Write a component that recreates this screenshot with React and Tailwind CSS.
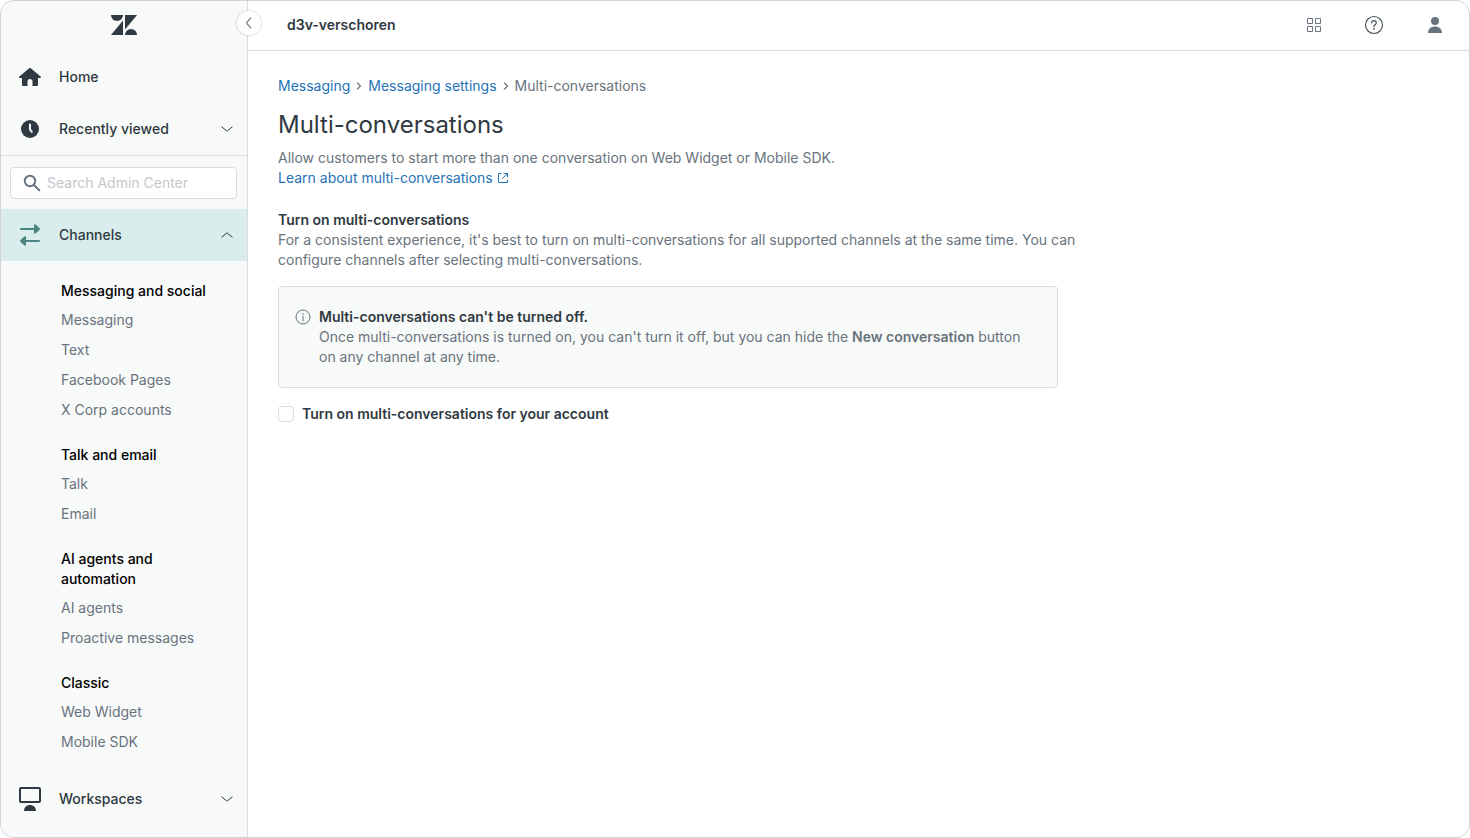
import { useState } from 'react';

// === NAV DATA ===
const CHANNEL_GROUPS = [
  {
    title: 'Messaging and social',
    items: ['Messaging', 'Text', 'Facebook Pages', 'X Corp accounts'],
  },
  { title: 'Talk and email', items: ['Talk', 'Email'] },
  { title: 'AI agents and automation', items: ['AI agents', 'Proactive messages'] },
  { title: 'Classic', items: ['Web Widget', 'Mobile SDK'] },
];

// === ICONS ===
function LogoIcon() {
  return (
    <svg width="26" height="20" viewBox="0 0 26 20" fill="currentColor" aria-hidden="true">
      <path d="M0 0h12a6 6 0 0 1-12 0z" />
      <path d="M12 5.4V20H0z" />
      <path d="M14 0h12L14 14.6z" />
      <path d="M14 20a6 6 0 0 1 12 0z" />
    </svg>
  );
}

function HomeIcon() {
  return (
    <svg width="26" height="26" viewBox="0 0 26 26" fill="currentColor" aria-hidden="true">
      <path d="M12.2 4.3a1.2 1.2 0 0 1 1.6 0l9.8 8.1c.7.6.3 1.6-.6 1.6h-2v7.2c0 .5-.3.8-.8.8h-4.700v-4.500a2.500 2.500 0 0 0-5 0V22H5.800c-.5 0-.8-.3-.8-.8V14H3c-.9 0-1.300-1-.6-1.600z" />
    </svg>
  );
}

function ClockIcon() {
  return (
    <svg width="26" height="26" viewBox="0 0 26 26" aria-hidden="true">
      <circle cx="13" cy="13" r="9" fill="currentColor" />
      <path d="M13 8.500v5l1.800 2.300" fill="none" stroke="#f8f9f9" strokeWidth="2" strokeLinecap="round" strokeLinejoin="round" />
    </svg>
  );
}

function ChannelsIcon() {
  return (
    <svg width="26" height="26" viewBox="0 0 26 26" fill="currentColor" aria-hidden="true">
      <path d="M4 6h13V3.200c0-1 .9-1.300 1.600-.7l3.900 3.600c.6.500.6 1.300 0 1.800l-3.900 3.600c-.7.6-1.600.3-1.600-.7V8H4a1 1 0 0 1 0-2z" />
      <path d="M22 18H9v-2.800c0-1-.9-1.300-1.600-.7l-3.900 3.600c-.6.500-.6 1.300 0 1.800l3.900 3.600c.7.600 1.600.3 1.600-.7V20h13a1 1 0 0 0 0-2z" />
    </svg>
  );
}

function WorkspacesIcon() {
  return (
    <svg width="26" height="26" viewBox="0 0 26 26" aria-hidden="true">
      <rect x="3" y="2" width="20" height="14" rx="1" fill="none" stroke="currentColor" strokeWidth="2" />
      <path d="M7 25c0-3.500 2.500-6 6-6s6 2.500 6 6z" fill="currentColor" />
    </svg>
  );
}

function ChevronIcon({ up }) {
  return (
    <svg width="12" height="12" viewBox="0 0 12 12" fill="none" stroke="currentColor" strokeLinecap="round" aria-hidden="true">
      <path d={up ? 'M.8 8.100l4.600-3.800a1 1 0 0 1 1.200 0l4.600 3.800' : 'M.8 3.900l4.600 3.800a1 1 0 0 0 1.200 0l4.600-3.800'} />
    </svg>
  );
}

function SearchIcon() {
  return (
    <svg width="18" height="18" viewBox="0 0 18 18" fill="none" stroke="currentColor" strokeWidth="2" strokeLinecap="round" className="shrink-0" aria-hidden="true">
      <circle cx="7" cy="7" r="5.200" />
      <path d="M11 11l5.300 5.300" />
    </svg>
  );
}

function AppsIcon() {
  return (
    <svg width="16" height="16" viewBox="0 0 16 16" fill="none" stroke="currentColor" aria-hidden="true">
      <path d="M1.500 1.500h5v5h-5zM9.500 1.500h5v5h-5zM1.500 9.500h5v5h-5zM9.500 9.500h5v5h-5z" />
    </svg>
  );
}

function HelpIcon() {
  return (
    <svg width="20" height="20" viewBox="0 0 20 20" fill="none" stroke="currentColor" strokeWidth="1.200" aria-hidden="true">
      <circle cx="10" cy="10" r="8.500" />
      <path d="M7.700 7.900c0-1.400 1-2.300 2.300-2.300s2.300.9 2.300 2.100c0 1.800-2.300 1.900-2.300 4" strokeLinecap="round" />
      <circle cx="10" cy="13.900" r=".9" fill="currentColor" stroke="none" />
    </svg>
  );
}

function UserIcon() {
  return (
    <svg width="18" height="18" viewBox="0 0 18 18" fill="currentColor" aria-hidden="true">
      <circle cx="9" cy="5" r="4" />
      <path d="M2 17c0-4 2.800-6.500 7-6.500s7 2.500 7 6.500z" />
    </svg>
  );
}

function InfoIcon() {
  return (
    <svg width="16" height="16" viewBox="0 0 16 16" fill="none" stroke="currentColor" aria-hidden="true">
      <circle cx="8" cy="8" r="7" />
      <path d="M8 7v5" strokeLinecap="round" />
      <circle cx="8" cy="4.800" r=".8" fill="currentColor" stroke="none" />
    </svg>
  );
}

function ExternalIcon() {
  return (
    <svg width="12" height="12" viewBox="0 0 12 12" fill="none" stroke="currentColor" strokeLinecap="round" aria-hidden="true">
      <path d="M4 1.500H1.500v9h9V8M7 1.500h3.500V5M10.300 1.700L5.500 6.500" />
    </svg>
  );
}

function CrumbSeparator() {
  return (
    <svg width="6" height="8" viewBox="0 0 6 8" fill="none" stroke="currentColor" strokeWidth="1.200" aria-hidden="true">
      <path d="M1.200.8L4.500 4 1.200 7.200" />
    </svg>
  );
}

// === SIDEBAR ===
function NavButton({ icon, label, open, active, onClick }) {
  return (
    <button
      type="button"
      onClick={onClick}
      aria-expanded={open}
      className={
        active
          ? 'flex h-13 w-full items-center bg-[#daeded] pr-3.5 pl-4 text-left font-medium text-[#2f3941]'
          : 'flex h-13 w-full items-center pr-3.5 pl-4 text-left font-medium text-[#2f3941]'
      }
    >
      <span className={active ? 'text-[#4b8683]' : ''}>{icon}</span>
      <span className="ml-4 flex-1">{label}</span>
      <ChevronIcon up={open} />
    </button>
  );
}

function Sidebar() {
  const [channelsOpen, setChannelsOpen] = useState(true);

  return (
    <aside className="relative w-[247px] shrink-0 rounded-l-[14px] border-r border-[#d8dcde] bg-[#f8f9f9]">
      <div className="flex h-12 items-center justify-center text-[#2f3941]">
        <LogoIcon />
      </div>

      {/* Collapse handle sits over the sidebar edge */}
      <button
        type="button"
        aria-label="Collapse sidebar"
        className="absolute top-2.5 -right-3.5 flex size-6 items-center justify-center rounded-full bg-white text-[#68737d] shadow-[0_0_2px_1px_rgba(47,57,65,0.14)]"
      >
        <svg width="12" height="12" viewBox="0 0 12 12" fill="none" stroke="currentColor" strokeLinecap="round" strokeWidth="1.200" aria-hidden="true">
          <path d="M7.600 1.200L4 5.400a1 1 0 0 0 0 1.200l3.600 4.200" />
        </svg>
      </button>

      <nav className="border-b border-[#d8dcde] pt-0.5">
        <a href="#home" className="flex h-13 items-center pl-4 font-medium text-[#2f3941]">
          <HomeIcon />
          <span className="ml-4">Home</span>
        </a>
        <NavButton icon={<ClockIcon />} label="Recently viewed" open={false} />
      </nav>

      <div className="pt-[11px] pr-2.5 pb-2.5 pl-[9px]">
        <label className="flex h-8 items-center rounded border border-[#d8dcde] bg-white px-3 text-[#68737d]">
          <SearchIcon />
          <input
            type="search"
            aria-label="Search Admin Center"
            placeholder="Search Admin Center"
            className="ml-1.5 w-full min-w-0 bg-transparent text-[#2f3941] outline-none placeholder:text-[#c2c8cc]"
          />
        </label>
      </div>

      <NavButton
        icon={<ChannelsIcon />}
        label="Channels"
        open={channelsOpen}
        active
        onClick={() => setChannelsOpen(!channelsOpen)}
      />

      {channelsOpen && (
        <div className="flex flex-col gap-5 pt-5 pr-10 pb-4 pl-15">
          {CHANNEL_GROUPS.map((group) => (
            <section key={group.title}>
              <h2 className="font-medium text-black">{group.title}</h2>
              <ul className="mt-1">
                {group.items.map((item) => (
                  <li key={item}>
                    <a href="#channel" className="block py-[5px] text-[#68737d]">
                      {item}
                    </a>
                  </li>
                ))}
              </ul>
            </section>
          ))}
        </div>
      )}

      <NavButton icon={<WorkspacesIcon />} label="Workspaces" open={false} />
    </aside>
  );
}

// === PAGE ===
export default function App() {
  const [enabled, setEnabled] = useState(false);

  return (
    <div className="flex min-h-screen rounded-[14px] border border-[#d0d2d3] bg-white font-['Inter',sans-serif] text-sm text-[#68737d]">
      <Sidebar />

      <div className="min-w-0 flex-1">
        <header className="flex h-[50px] items-center border-b border-[#d8dcde] pr-[25px] pb-0.5 pl-[39px]">
          <span className="flex-1 font-semibold text-[#2f3941]">d3v-verschoren</span>
          <div className="flex items-center gap-[42px]">
            <button type="button" aria-label="Products">
              <AppsIcon />
            </button>
            <button type="button" aria-label="Help" className="text-[#49545c]">
              <HelpIcon />
            </button>
            <button type="button" aria-label="Profile">
              <UserIcon />
            </button>
          </div>
        </header>

        <main className="max-w-[880px] px-[30px] pt-[25px]">
          <nav aria-label="Breadcrumb" className="flex items-center gap-1.5">
            <a href="#messaging" className="text-[#1f73b7]">Messaging</a>
            <CrumbSeparator />
            <a href="#settings" className="text-[#1f73b7]">Messaging settings</a>
            <CrumbSeparator />
            <span aria-current="page">Multi-conversations</span>
          </nav>

          <h1 className="mt-[13px] text-2xl leading-8 text-[#2f3941]">Multi-conversations</h1>
          <p className="mt-[7px]">
            Allow customers to start more than one conversation on Web Widget or Mobile SDK.
          </p>
          <a href="#learn" className="inline-flex items-center gap-1 align-top text-[#1f73b7]">
            Learn about multi-conversations
            <ExternalIcon />
          </a>

          <h2 className="mt-[22px] font-semibold text-[#2f3941]">Turn on multi-conversations</h2>
          <p>
            For a consistent experience, it's best to turn on multi-conversations for all supported channels at the same time. You can
            configure channels after selecting multi-conversations.
          </p>

          <div className="mt-4 flex max-w-[780px] gap-2 rounded border border-[#d8dcde] bg-[#f8f9f9] py-5 pr-6 pl-4">
            <span className="mt-0.5 shrink-0">
              <InfoIcon />
            </span>
            <div>
              <h3 className="font-semibold text-[#2f3941]">Multi-conversations can't be turned off.</h3>
              <p>
                Once multi-conversations is turned on, you can't turn it off, but you can hide the{' '}
                <strong className="font-semibold">New conversation</strong> button on any channel at any time.
              </p>
            </div>
          </div>

          <label className="mt-4 flex items-center gap-2 font-semibold text-[#2f3941]">
            <input
              type="checkbox"
              checked={enabled}
              onChange={(e) => setEnabled(e.target.checked)}
              className="size-4 appearance-none rounded border border-[#d8dcde] bg-white checked:border-[#1f73b7] checked:bg-[#1f73b7]"
            />
            Turn on multi-conversations for your account
          </label>
        </main>
      </div>
    </div>
  );
}
